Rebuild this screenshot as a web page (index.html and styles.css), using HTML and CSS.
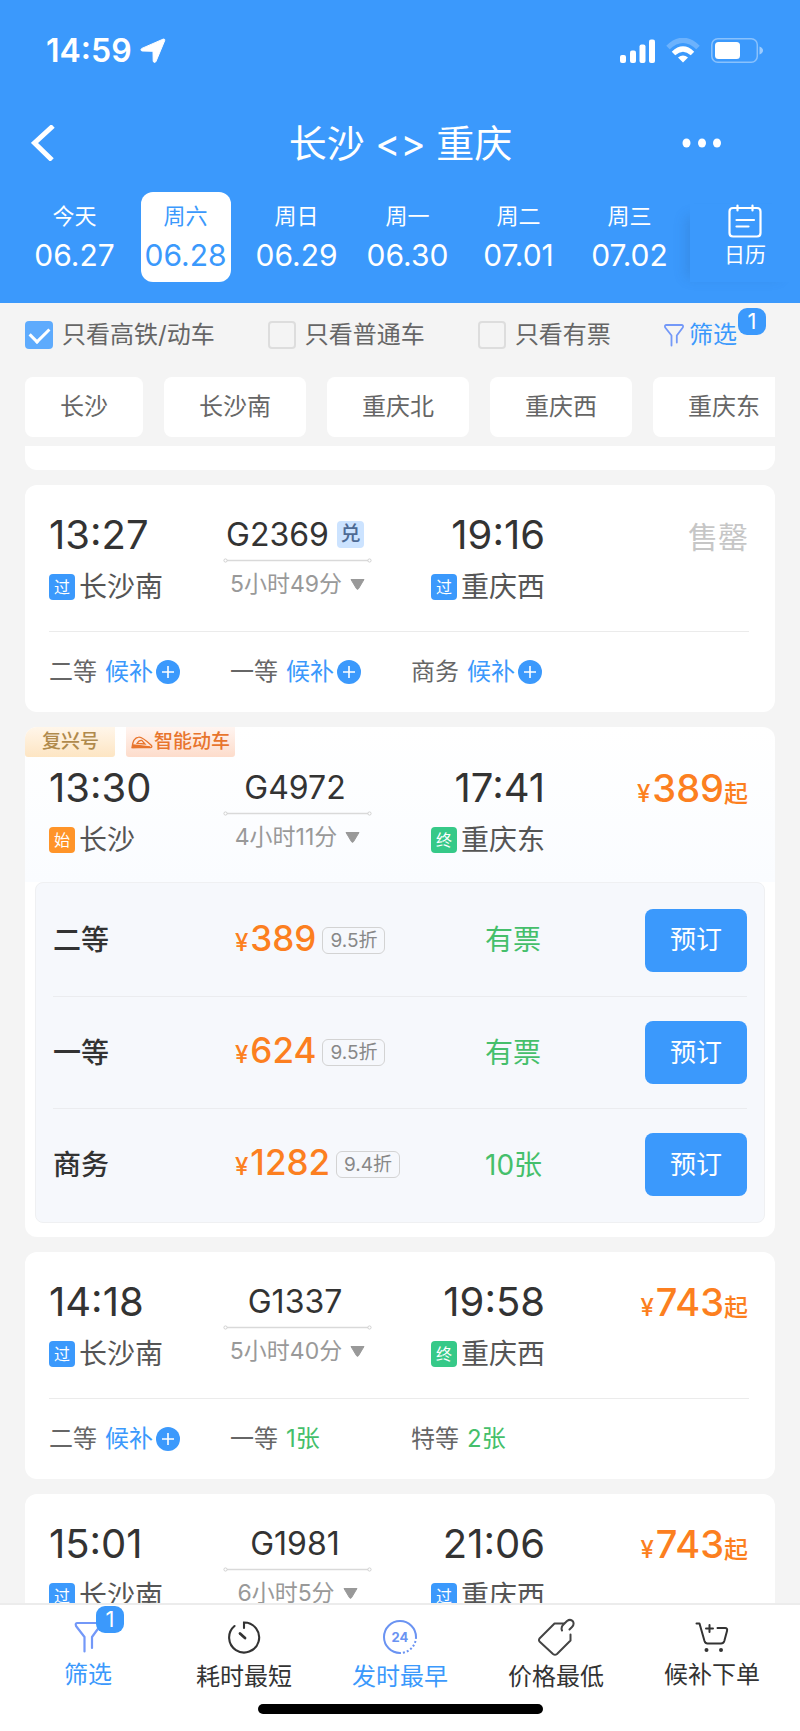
FILE: index.html
```html
<!DOCTYPE html>
<html lang="zh-CN">
<head>
<meta charset="utf-8">
<meta name="viewport" content="width=device-width, initial-scale=1">
<title>长沙 &lt;&gt; 重庆</title>
<link rel="stylesheet" href="styles.css">
</head>
<body>
<svg class="sprite" aria-hidden="true">
  <symbol id="i-line" viewBox="0 0 149 5"><path d="M4 2.5h141" stroke="#d9d9d9" stroke-width="1.4"/><circle cx="2.5" cy="2.5" r="1.6" fill="#fff" stroke="#cfcfcf"/><circle cx="146.5" cy="2.5" r="1.6" fill="#fff" stroke="#cfcfcf"/></symbol>
  <symbol id="i-down" viewBox="0 0 15 11"><path d="M1 0.5h13L8.5 9.7q-1 1.3-2 0z" fill="#999" stroke="#999" stroke-linejoin="round"/></symbol>
  <symbol id="i-plus" viewBox="0 0 24 24"><circle cx="12" cy="12" r="12" fill="#3b99fc"/><path d="M12 6v12M6 12h12" stroke="#fff" stroke-width="1.6"/></symbol>
</svg>
<div class="app">
  <header class="top">
    <div class="status">
      <div class="clock">14:59
        <svg width="26" height="26" viewBox="0 0 26 26"><path d="M24.7 2.6 16 23.4c-.6 1.500-2.700 1.300-2.800-.3L13 13.300 2.200 13c-1.500-.1-1.700-2-.3-2.600L23 1.200c1.200-.5 2.200.3 1.700 1.400z" fill="#fff" stroke="#fff" stroke-width="1" stroke-linejoin="round"/></svg>
      </div>
      <div class="signals">
        <svg width="35" height="24" viewBox="0 0 35 24" fill="#fff"><rect x="0" y="16" width="6" height="8" rx="2"/><rect x="10" y="11.500" width="6" height="12.500" rx="2"/><rect x="19.500" y="5.500" width="6" height="18.500" rx="2"/><rect x="29" y="0.500" width="6" height="23.500" rx="2"/></svg>
        <svg width="34" height="25" viewBox="0 0 34 25" fill="none"><path d="M2 9.500Q17-5 32 9.500" stroke="#fff" stroke-opacity=".25" stroke-width="5"/><path d="M7.500 15.500Q17 6.500 26.500 15.500" stroke="#fff" stroke-width="5"/><path d="M12 19.500q5-4 10 0l-5 5z" fill="#fff"/></svg>
        <svg width="53" height="25" viewBox="0 0 53 25" fill="none"><rect x=".8" y=".8" width="45.500" height="23.400" rx="6" stroke="#fff" stroke-opacity=".4" stroke-width="1.500"/><rect x="4" y="4" width="25" height="17" rx="3.500" fill="#fff"/><path d="M48.500 8.500q3.500 1.500 3.500 4t-3.500 4z" fill="#fff" fill-opacity=".5"/></svg>
      </div>
    </div>
    <nav class="nav">
      <button class="icon-btn back" aria-label="返回"><svg width="25" height="36" viewBox="0 0 25 36"><path d="M22 1 3.500 18 21 35" fill="none" stroke="#fff" stroke-width="5"/></svg></button>
      <h1 class="title">长沙 &lt;&gt; 重庆</h1>
      <button class="icon-btn more" aria-label="更多"><svg width="40" height="10" viewBox="0 0 40 10" fill="#fff"><ellipse cx="4.500" cy="5" rx="4" ry="4.500"/><ellipse cx="20" cy="5" rx="4" ry="4.500"/><ellipse cx="35" cy="5" rx="4" ry="4.500"/></svg></button>
    </nav>
    <div class="dates">
      <div class="days">
        <button class="day"><span class="week">今天</span><span class="date">06.27</span></button>
        <button class="day is-active"><span class="week">周六</span><span class="date">06.28</span></button>
        <button class="day"><span class="week">周日</span><span class="date">06.29</span></button>
        <button class="day"><span class="week">周一</span><span class="date">06.30</span></button>
        <button class="day"><span class="week">周二</span><span class="date">07.01</span></button>
        <button class="day"><span class="week">周三</span><span class="date">07.02</span></button>
      </div>
      <button class="calendar">
        <svg width="34" height="34" viewBox="0 0 34 34" fill="none" stroke="#fff" stroke-width="2.200" stroke-linecap="round" stroke-linejoin="round"><path d="M5 4h24q3.500 0 3.500 3.500V29q0 3.500-3.500 3.500H5Q1.500 32.500 1.500 29V7.500Q1.500 4 5 4M9.500 1.500v5M24.500 1.500v5M8.500 16h17.500M8.500 22.500h12"/></svg>
        <span>日历</span>
      </button>
    </div>
  </header>

  <div class="filters">
    <label class="check"><input type="checkbox" checked>只看高铁/动车</label>
    <label class="check"><input type="checkbox">只看普通车</label>
    <label class="check"><input type="checkbox">只看有票</label>
    <button class="filter"><svg width="20" height="23" viewBox="0 0 20 23" fill="none" stroke="#7398f8" stroke-width="1.800" stroke-linecap="round" stroke-linejoin="round"><path d="M7.500 21.500V11.500L1.200 3.500Q.3 1 2.500 1h15q2.200 0 1.300 2.500L12.800 11.500V18.500"/></svg>筛选<span class="count">1</span></button>
  </div>

  <div class="chips">
    <button class="chip">长沙</button>
    <button class="chip">长沙南</button>
    <button class="chip">重庆北</button>
    <button class="chip">重庆西</button>
    <button class="chip">重庆东</button>
  </div>

  <main class="list">
    <div class="card card-tail"></div>

    <article class="card">
      <div class="trip">
        <div class="stop"><div class="time">13:27</div><div class="station"><span class="mark mark-pass">过</span>长沙南</div></div>
        <div class="run"><div class="train">G2369<span class="redeem">兑</span></div><svg class="line"><use href="#i-line"/></svg><div class="duration">5小时49分<svg class="down"><use href="#i-down"/></svg></div></div>
        <div class="stop stop-end"><div class="time">19:16</div><div class="station"><span class="mark mark-pass">过</span>重庆西</div></div>
        <div class="sold">售罄</div>
      </div>
      <div class="seats">
        <div class="seat">二等<span class="wait">候补</span><svg class="plus"><use href="#i-plus"/></svg></div>
        <div class="seat">一等<span class="wait">候补</span><svg class="plus"><use href="#i-plus"/></svg></div>
        <div class="seat">商务<span class="wait">候补</span><svg class="plus"><use href="#i-plus"/></svg></div>
      </div>
    </article>

    <article class="card card-open">
      <div class="tags">
        <span class="tag tag-gold">复兴号</span>
        <span class="tag tag-smart"><svg width="22" height="13" viewBox="0 0 22 13" fill="none" stroke="#e8752d" stroke-width="1.300"><path d="M1 11.500Q2 2 7.500 1.200 11 .5 20.500 9.500q1 2-1 2z"/><path d="M6 7.500Q8 4 11 4.500l3 3.500z"/><path d="M2 9l17 1.800-17 .7z" fill="#e8752d"/></svg>智能动车</span>
      </div>
      <div class="trip">
        <div class="stop"><div class="time">13:30</div><div class="station"><span class="mark mark-start">始</span>长沙</div></div>
        <div class="run"><div class="train">G4972</div><svg class="line"><use href="#i-line"/></svg><div class="duration">4小时11分<svg class="down"><use href="#i-down"/></svg></div></div>
        <div class="stop stop-end"><div class="time">17:41</div><div class="station"><span class="mark mark-end">终</span>重庆东</div></div>
        <div class="price">¥<b>389</b>起</div>
      </div>
      <div class="panel">
        <div class="row"><span class="class">二等</span><span class="fare">¥<b>389</b><span class="off">9.5折</span></span><span class="left">有票</span><button class="book">预订</button></div>
        <div class="row"><span class="class">一等</span><span class="fare">¥<b>624</b><span class="off">9.5折</span></span><span class="left">有票</span><button class="book">预订</button></div>
        <div class="row"><span class="class">商务</span><span class="fare">¥<b>1282</b><span class="off">9.4折</span></span><span class="left">10张</span><button class="book">预订</button></div>
      </div>
    </article>

    <article class="card">
      <div class="trip">
        <div class="stop"><div class="time">14:18</div><div class="station"><span class="mark mark-pass">过</span>长沙南</div></div>
        <div class="run"><div class="train">G1337</div><svg class="line"><use href="#i-line"/></svg><div class="duration">5小时40分<svg class="down"><use href="#i-down"/></svg></div></div>
        <div class="stop stop-end"><div class="time">19:58</div><div class="station"><span class="mark mark-end">终</span>重庆西</div></div>
        <div class="price">¥<b>743</b>起</div>
      </div>
      <div class="seats">
        <div class="seat">二等<span class="wait">候补</span><svg class="plus"><use href="#i-plus"/></svg></div>
        <div class="seat">一等<span class="some">1张</span></div>
        <div class="seat">特等<span class="some">2张</span></div>
      </div>
    </article>

    <article class="card">
      <div class="trip">
        <div class="stop"><div class="time">15:01</div><div class="station"><span class="mark mark-pass">过</span>长沙南</div></div>
        <div class="run"><div class="train">G1981</div><svg class="line"><use href="#i-line"/></svg><div class="duration">6小时5分<svg class="down"><use href="#i-down"/></svg></div></div>
        <div class="stop stop-end"><div class="time">21:06</div><div class="station"><span class="mark mark-pass">过</span>重庆西</div></div>
        <div class="price">¥<b>743</b>起</div>
      </div>
    </article>
  </main>

  <footer class="bottom">
    <div class="tabs">
      <button class="tab tab-filter is-blue">
        <span class="tab-icon"><svg width="28" height="32" viewBox="0 0 28 32" fill="none" stroke="#7398f8" stroke-width="2.200" stroke-linecap="round" stroke-linejoin="round"><path d="M10.500 30.500V16L2 5Q1 2 3.500 2h21q2.500 0 1.500 3L18 16V27"/></svg><span class="count">1</span></span>
        <span>筛选</span>
      </button>
      <button class="tab">
        <span class="tab-icon"><svg width="34" height="34" viewBox="0 0 34 34" fill="none" stroke="#333" stroke-width="2.100" stroke-linecap="round"><path d="M17 8V2.500A15 15 0 1 1 7.500 6"/><path d="M13 13.500l5 4.500" stroke-width="2.800"/></svg></span>
        <span>耗时最短</span>
      </button>
      <button class="tab is-blue">
        <span class="tab-icon"><svg width="34" height="34" viewBox="0 0 34 34" fill="none" stroke="#6a93f2" stroke-width="2"><path d="M17 33A16 16 0 1 1 33 17"/><path d="M33 17A16 16 0 0 1 17 33" stroke-dasharray="2 2"/></svg><span class="hours">24</span></span>
        <span>发时最早</span>
      </button>
      <button class="tab">
        <span class="tab-icon"><svg width="40" height="38" viewBox="0 0 40 38" fill="none" stroke="#444" stroke-width="2" stroke-linecap="round" stroke-linejoin="round"><path d="M28 5.500H18.500L3.500 20.500Q2.500 22 3.500 23.500L17 36q2 1.500 4 0L34.500 22.500V16.500M26 12.500Q24.500 9 28 6l3-3q3.500-2.500 6 .5 1.500 3-1 5.500l-2.500 2.500"/></svg></span>
        <span>价格最低</span>
      </button>
      <button class="tab tab-cart">
        <span class="tab-icon"><svg width="34" height="30" viewBox="0 0 34 30" fill="none" stroke="#333" stroke-width="2" stroke-linecap="round" stroke-linejoin="round"><path d="M1.500 1.500h3L9.500 19q.8 2.500 3 2.500h13.500q2.500 0 3.300-2.500L32 9q.8-3-2-3h-7.500M14.500 3v7M11 6.500h7"/><circle cx="11.500" cy="28" r="1" fill="#333"/><circle cx="26" cy="28" r="1" fill="#333"/></svg></span>
        <span>候补下单</span>
      </button>
    </div>
    <div class="home"></div>
  </footer>
</div>
</body>
</html>
```
FILE: styles.css
```css
* { box-sizing: border-box; }
body { margin: 0; background: #f4f4f4; color: #333; font-family: Inter, "Noto Sans CJK SC", sans-serif; }
button { margin: 0; padding: 0; border: 0; background: none; color: inherit; font: inherit; cursor: pointer; }
svg { display: block; flex: none; }
.sprite { position: absolute; width: 0; height: 0; }
.app { display: flex; flex-direction: column; height: 100vh; }

/* header */
.top { flex: none; padding-bottom: 21px; background: #3b99fc; color: #fff; }
.status { display: flex; justify-content: space-between; align-items: center; height: 101px; padding: 0 36px 0 46px; }
.clock { display: flex; align-items: center; gap: 8px; font-size: 32px; font-weight: 600; }
.signals { display: flex; align-items: center; gap: 11px; }
.nav { display: grid; grid-template-columns: 1fr auto 1fr; align-items: center; height: 83px; padding: 0 78px 0 31px; }
.back { justify-self: start; }
.more { justify-self: end; }
.title { margin: 0; padding-left: 48px; font-size: 38px; line-height: 56px; font-weight: 400; }
.dates { display: flex; padding-top: 8px; }
.days { flex: 1; display: grid; grid-template-columns: repeat(6, 1fr); padding: 0 5px 0 19px; }
.day { display: flex; flex-direction: column; align-items: center; justify-self: center; width: 90px; height: 90px; padding-top: 7px; border-radius: 12px; }
.day.is-active { background: #fff; color: #3b99fc; }
.week { font-size: 22px; line-height: 34px; }
.date { font-size: 30px; line-height: 44px; }
.calendar { display: flex; flex-direction: column; align-items: center; gap: 1px; width: 110px; margin-top: 12px; font-size: 21px; line-height: 32px; box-shadow: -12px 4px 12px -8px rgba(40, 90, 150, 0.2); }

/* filters */
.filters { flex: none; display: flex; justify-content: space-between; align-items: center; height: 64px; padding: 0 63px 0 25px; color: #666; font-size: 24px; line-height: 36px; }
.check { display: flex; align-items: center; gap: 9px; }
.check input { appearance: none; width: 28px; height: 28px; margin: 0; border: 2px solid #ddd; border-radius: 4px; }
.check input:checked { border: 0; background: #5eabfd; display: grid; place-items: center; }
.check input:checked::before { content: ""; width: 16px; height: 9px; border: solid #fff; border-width: 0 0 3px 3px; rotate: -45deg; translate: 0 -2px; }
.filter { position: relative; display: flex; align-items: center; gap: 5px; color: #3b99fc; }
.count { position: absolute; left: 74px; top: -9px; width: 28px; height: 27px; border-radius: 9px; background: #3b99fc; color: #fff; font-size: 22px; line-height: 27px; text-align: center; }
.chips { flex: none; display: flex; gap: 21px; margin: 10px 25px 9px; overflow: hidden; color: #666; font-size: 24px; line-height: 36px; }
.chip { flex: none; padding: 12px 35px; border-radius: 8px; background: #fff; }

/* train list */
.list { flex: 1; min-height: 0; display: flex; flex-direction: column; gap: 15px; padding: 0 25px; overflow: hidden; }
.card { flex: none; overflow: hidden; border-radius: 12px; background: #fff; }
.card-tail { height: 24px; border-radius: 0 0 12px 12px; }
.card-open { background: linear-gradient(#fff, #fafcff 155px, #fff 155px); }
.trip { display: grid; grid-template-columns: 174fr 149px 173fr 203fr; padding: 26px 27px 28px 24px; }
.time { font-size: 40px; line-height: 48px; font-weight: 400; }
.station { display: flex; align-items: center; gap: 4px; margin-top: 12px; color: #555; font-size: 28px; line-height: 32px; }
.stop-end { justify-self: end; text-align: right; }
.mark { width: 26px; height: 26px; border-radius: 4px; color: #fff; font-size: 16px; line-height: 26px; text-align: center; }
.mark-pass { background: #3b99fc; }
.mark-start { background: #ff9429; }
.mark-end { background: #36c988; }
.run { display: flex; flex-direction: column; align-items: center; }
.train { display: flex; align-items: center; gap: 8px; padding-right: 5px; font-size: 32px; line-height: 47px; font-weight: 400; }
.redeem { width: 27px; height: 27px; border-radius: 4px; background: #cce3ff; color: #4d6a94; font-size: 20px; line-height: 27px; font-weight: 500; text-align: center; }
.line { width: 149px; height: 5px; }
.duration { display: flex; align-items: center; gap: 8px; margin-top: 5px; color: #999; font-size: 23px; line-height: 32px; }
.down { width: 15px; height: 11px; }
.sold { justify-self: end; color: #c6c6c6; font-size: 30px; line-height: 52px; }
.price { justify-self: end; color: #fc7f20; font-size: 24px; line-height: 48px; font-weight: 500; white-space: nowrap; }
.price b { margin-left: 2px; font-size: 38px; font-weight: 500; }
.seats { display: grid; grid-template-columns: 181fr 181fr 338fr; margin: 0 26px 0 24px; border-top: 1px solid #ebebeb; color: #666; font-size: 24px; line-height: 80px; }
.seat { display: flex; align-items: center; white-space: nowrap; }
.wait { margin: 0 3px 0 8px; color: #3b99fc; }
.some { margin-left: 8px; color: #45bf6b; }
.plus { width: 24px; height: 24px; }

/* opened card */
.tags { display: flex; gap: 11px; }
.tag { display: flex; align-items: center; gap: 1px; font-size: 19px; line-height: 30px; font-weight: 500; border-radius: 0 0 3px 3px; }
.tag-gold { padding: 0 16px 0 17px; background: linear-gradient(#fff6ea, #fde5c3); color: #b08a4c; }
.tag-smart { padding: 0 5px; background: linear-gradient(#fff5f1, #fddccb); color: #e8752d; }
.card-open .trip { padding-top: 7px; padding-bottom: 26px; }
.panel { margin: 0 10px 14px; padding: 1px 17px 2px; border: 1px solid #eff0f2; border-radius: 8px; background: #f6f8fc; }
.row { display: grid; grid-template-columns: 182fr 250fr 160fr 102px; align-items: center; height: 112px; font-size: 28px; line-height: 40px; }
.row + .row { border-top: 1px solid #ebecef; }
.class { font-weight: 500; }
.fare { display: flex; align-items: baseline; color: #fc7f20; font-size: 24px; font-weight: 500; }
.fare b { margin-left: 2px; font-size: 35px; font-weight: 500; }
.off { align-self: center; margin-left: 6px; padding: 0 7px; border: 1px solid #d3d3d3; border-radius: 6px; color: #888; font-size: 19px; line-height: 25px; font-weight: 400; }
.left { color: #45bf6b; }
.book { height: 63px; border-radius: 8px; background: #3b99fc; color: #fff; font-size: 26px; }

/* bottom bar */
.bottom { flex: none; height: 128px; border-top: 2px solid #ececec; background: #fff; }
.tabs { display: grid; grid-template-columns: repeat(5, 1fr); padding: 0 10px; font-size: 24px; line-height: 36px; }
.tab { display: flex; flex-direction: column; align-items: center; gap: 2px; padding-top: 12px; }
.tab-icon { position: relative; display: grid; place-items: center; height: 40px; }
.tab.is-blue { color: #3b99fc; }
.tab-filter, .tab-cart { gap: 0; }
.tab-filter .count { left: 22px; top: -11px; }
.hours { position: absolute; inset: 0; color: #6a93f2; font-size: 13px; line-height: 40px; font-weight: 700; text-align: center; }
.home { width: 285px; height: 10px; margin: 9px auto 0; border-radius: 5px; background: #000; }
```
